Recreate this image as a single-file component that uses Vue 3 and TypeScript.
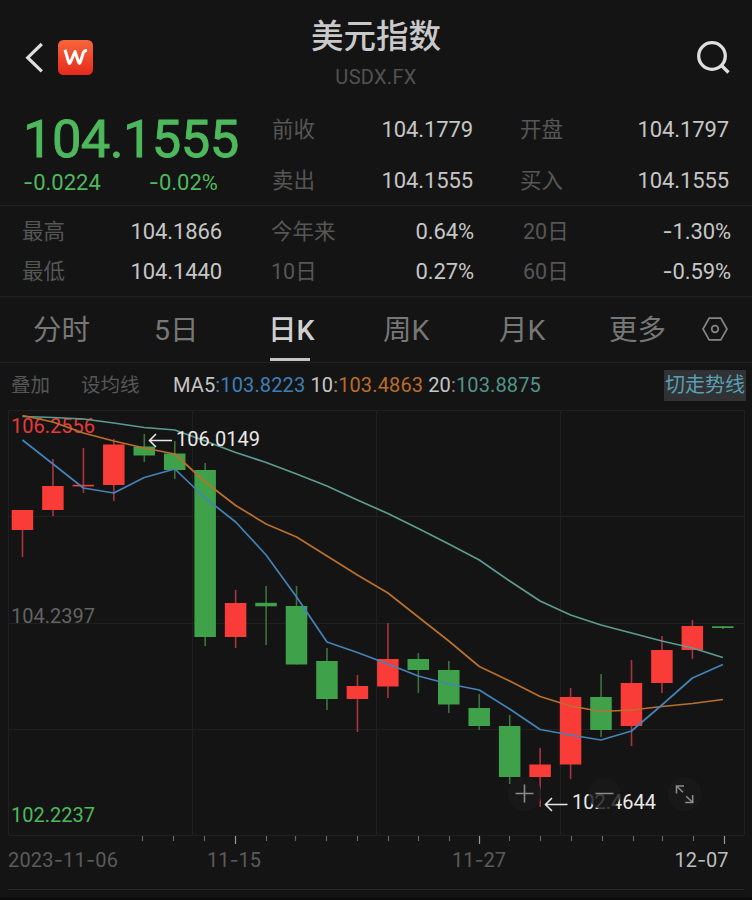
<script setup lang="ts">
interface Candle { open: number; close: number; high: number; low: number; up: boolean }

const split = (s: string): string[] => s.split(/(-)/).filter(Boolean)

const quotes = [
  ['前收', '104.1779', '开盘', '104.1797'],
  ['卖出', '104.1555', '买入', '104.1555'],
]
const stats = [
  ['最高', '104.1866', '今年来', '0.64%', '20日', '-1.30%'],
  ['最低', '104.1440', '10日', '0.27%', '60日', '-0.59%'],
]
const tabs = ['分时', '5日', '日K', '周K', '月K', '更多']
const active = '日K'

// Each row: body top, body bottom, wick top, wick bottom, rising (1) or falling (0)
const rows: number[][] = [
  [510, 530, 510, 557, 1], [486, 510, 459, 516, 1], [484.8, 486.4, 448, 493, 1],
  [444.5, 485, 439, 501, 1], [446.5, 455.5, 434, 462, 0], [453.5, 470, 441, 479, 0],
  [470, 637, 463, 646, 0], [603, 637, 590, 648, 1], [602.8, 606.3, 586, 645, 0],
  [606, 664.5, 586, 664.5, 0], [661, 699, 648, 710, 0], [686, 699, 675, 732, 1],
  [659, 686.5, 623, 698, 1], [659, 670, 653, 693, 0], [670, 704.5, 661, 713, 0],
  [708, 726, 694, 730, 0], [726, 777, 715, 784, 0], [764.5, 777, 748, 807, 1],
  [697, 764.5, 688, 779, 1], [697, 730, 674, 737, 0], [683, 726, 660, 746, 1],
  [650, 683, 636, 693, 1], [626, 650, 620, 659, 1], [626.3, 628, 626, 629, 0],
]
const candles: Candle[] = rows.map(([open, close, high, low, up]) => ({ open, close, high, low, up: up === 1 }))
const px = (i: number): number => 22.5 + i * 30.45
const line = (ys: number[]): string => ys.map((y, i) => `${px(i).toFixed(1)},${y}`).join(' ')

const ma5 = line([440, 464, 488, 493, 477.5, 469, 498, 522, 555, 597, 642, 652.5, 664, 676, 684, 690, 709, 729.5, 735, 740, 731, 705, 678, 664.5])
const ma10 = line([415.5, 422, 433, 441, 448, 454, 482, 505.5, 524, 537, 556, 575, 593, 617, 641, 666.5, 681, 696.5, 706, 711.5, 710, 706.5, 703.5, 699.5])
const ma20 = line([416.5, 417.5, 419, 423, 427.5, 430, 441, 452.5, 462.5, 474, 486, 500, 513.5, 528.5, 544, 560, 581, 601, 615, 625, 633, 641, 648, 657.5])

const ticks = [142.5, 173.5, 204.5, 235.5, 266.5, 295.5, 326.5, 357.5, 388.5, 418.5, 449.5, 479.5, 509.5, 540.5, 571.5, 602.5, 633.5, 662.5, 693.5, 724.5]
const longTicks = [235.5, 479.5, 724.5]
</script>

<template>
  <main class="app">
    <header class="header">
      <div class="nav">
        <svg class="back" width="20" height="32" viewBox="0 0 20 32"><path d="M17.800 2 3.700 15.700 17.800 29.400" /></svg>
        <svg class="logo" width="35" height="35" viewBox="0 0 35 35">
          <defs><linearGradient id="lg" x1="0" y1="0" x2="0" y2="1"><stop offset="0" stop-color="#f9653a" /><stop offset="1" stop-color="#e52a1d" /></linearGradient></defs>
          <rect width="35" height="35" rx="5.500" fill="url(#lg)" />
          <path d="M7 9.800 10.700 22.300q.7 2.200 1.700 0L17 11.500 20.600 22.300q.8 2.200 1.700 0L25.300 12.800q.8-2.200 3.700-2.200" />
        </svg>
      </div>
      <div class="heading">
        <h1>美元指数</h1>
        <p>USDX.FX</p>
      </div>
      <svg class="search" width="36" height="36" viewBox="0 0 36 36"><circle cx="16" cy="16" r="13.300" /><path d="m25.500 25.500 7 7" /></svg>
    </header>

    <section class="quote">
      <div class="price">
        <strong>104.1555</strong>
        <div class="change">
          <span v-for="t in ['-0.0224', '-0.02%']" :key="t"><span v-for="(p, i) in split(t)" :key="i" :class="{ dash: p === '-' }">{{ p }}</span></span>
        </div>
      </div>
      <div class="quotes">
        <div v-for="(q, i) in quotes" :key="i" class="quote-row">
          <span class="label">{{ q[0] }}</span><span class="num">{{ q[1] }}</span>
          <span class="label third">{{ q[2] }}</span><span class="num">{{ q[3] }}</span>
        </div>
      </div>
    </section>

    <section class="stats">
      <div v-for="(s, i) in stats" :key="i" class="stat-row">
        <template v-for="(t, j) in s" :key="j">
          <span v-if="j % 2 === 0" class="label">{{ t }}</span>
          <span v-else class="num"><span v-for="(p, k) in split(t)" :key="k" :class="{ dash: p === '-' }">{{ p }}</span></span>
        </template>
      </div>
    </section>

    <nav class="tabs">
      <span v-for="t in tabs" :key="t" class="tab" :class="{ active: t === active }">{{ t }}</span>
      <svg class="settings" width="26" height="24" viewBox="0 0 26 24"><path d="M7.200 1.200h11.600L25 12l-6.200 10.800H7.200L1 12z" /><circle cx="13" cy="12" r="3.300" /></svg>
    </nav>

    <section class="tools">
      <span class="tool">叠加</span>
      <span class="tool">设均线</span>
      <p class="ma">MA5<i class="c5">:103.8223</i> 10<i class="c10"><b>:</b>103.4863</i> 20<i class="c20"><b>:</b>103.8875</i></p>
      <span class="switch">切走势线</span>
    </section>

    <svg class="chart" width="752" height="492" viewBox="0 408 752 492">
      <g class="grid">
        <path d="M9 410.500H744M9 516.500H744M9 623.500H744M9 729.500H744M9 835.500H744M8.500 410V835M192.500 410V835M376.500 410V835M560.500 410V835M744.500 410V835" />
      </g>
      <path class="divider" d="M8 889.500H744" />
      <rect y="897" width="752" height="3" fill="#0d0d0d" />
      <text class="price-label high" x="11" y="433" textLength="84">106.2556</text>
      <text class="price-label" x="11" y="623" textLength="84">104.2397</text>
      <text class="price-label low" x="11" y="822" textLength="84">102.2237</text>

      <g v-for="(c, i) in candles" :key="i" :class="c.up ? 'up' : 'down'">
        <path class="wick" :d="`M${px(i)} ${c.high}V${c.low}`" />
        <rect :x="px(i) - 10.8" :y="c.open" width="21.500" :height="c.close - c.open" />
      </g>
      <polyline class="ma-line l20" :points="ma20" />
      <polyline class="ma-line l10" :points="ma10" />
      <polyline class="ma-line l5" :points="ma5" />

      <g class="note">
        <path d="M172 440.500H149.500M156 434l-6.500 6.500 6.500 6.500" />
        <text x="176" y="445.500" textLength="84">106.0149</text>
        <path d="M567.500 804.500H545.500M552 798l-6.500 6.500 6.500 6.500" />
        <text x="572" y="809" textLength="84">102.4644</text>
      </g>

      <g class="control">
        <circle cx="524.500" cy="794" r="17" /><circle cx="604.500" cy="794" r="16" /><circle cx="684.500" cy="794" r="17" />
        <path d="M515.500 793.500h18M524.500 784.500v18M595.500 793.500h18" />
        <path class="expand" d="M676.500 793.500v-7.500h7.500M676.500 786l6.500 6.300M692.700 795v7.500h-7.500M692.700 802.500l-6.500-6.300" />
      </g>

      <path v-for="t in ticks" :key="t" class="tick" :class="{ long: longTicks.includes(t) }" :d="`M${t} 836V${longTicks.includes(t) ? 844 : 841}`" />
      <g class="date">
        <text x="8" y="866.500" textLength="110">2023<tspan class="dash">-</tspan>11<tspan class="dash">-</tspan>06</text>
        <text x="207" y="866.500" textLength="54">11<tspan class="dash">-</tspan>15</text>
        <text x="452" y="866.500" textLength="54">11<tspan class="dash">-</tspan>27</text>
        <text class="today" x="674.500" y="866.500" textLength="54">12<tspan class="dash">-</tspan>07</text>
      </g>
    </svg>
  </main>
</template>

<style>
body { background: #141414; }
</style>

<style scoped>
.app { width: 752px; height: 900px; overflow: hidden; background: #141414; color: #c6c6c6; font-family: Roboto, "Noto Sans CJK SC", sans-serif; }
.dash { font-family: Inter, sans-serif; line-height: 1; }
.header { display: grid; grid-template-columns: 200px 1fr 200px; height: 100px; }
.nav { display: flex; gap: 14px; padding: 40px 0 0 24px; align-items: flex-start; }
.back { margin-top: 2px; fill: none; stroke: #dedede; stroke-width: 3.200; }
.logo path { fill: none; stroke: #fff; stroke-width: 3; stroke-linejoin: round; }
.heading { text-align: center; }
h1 { margin: 13px 0 0; font-size: 32.5px; line-height: 48px; font-weight: 500; color: #c9c9c9; }
.heading p { margin: 4px 0 0; font-size: 20px; line-height: 24px; color: #525252; letter-spacing: 0.3px; }
.search { justify-self: end; margin: 40px 20px 0 0; fill: none; stroke: #dedede; stroke-width: 3.300; }
.quote { display: flex; height: 105px; border-bottom: 1px solid #222; }
.price { width: 272px; color: #4eb95c; }
.price strong { display: block; margin: 9px 0 0 23px; font-size: 52.500px; line-height: 60px; font-weight: 400; letter-spacing: -0.6px; -webkit-text-stroke: 0.9px #4eb95c; }
.change { display: flex; gap: 48px; margin: 1px 0 0 23px; font-size: 22px; line-height: 26px; }
.quotes { flex: 1; padding-top: 5px; }
.quote-row { display: grid; grid-template-columns: 92px 109px 109px 147px; height: 51px; line-height: 50px; font-size: 22px; }
.third { padding-left: 47px; }
.label { color: #565656; font-size: 21.500px; white-space: nowrap; }
.num { text-align: right; font-size: 22px; letter-spacing: -0.1px; }
.stats { height: 90px; border-bottom: 1px solid #222; }
.stat-row { display: grid; grid-template-columns: 99px 101px 150px 102px 147px 110px; height: 40px; padding-left: 22px; line-height: 42px; }
.stat-row:first-child { padding-top: 5px; }
.stat-row .label:nth-child(n+2) { padding-left: 49px; }
.tabs { display: flex; height: 65px; border-bottom: 1px solid #222; font-size: 28.500px; color: #777; line-height: 67px; }
.tab { position: relative; flex: 0 0 115px; padding-left: 33px; box-sizing: border-box; white-space: nowrap; }
.tab:nth-child(2) { padding-left: 39px; }
.tab:nth-child(3) { padding-left: 38px; }
.tab:nth-child(4) { padding-left: 38px; }
.tab:nth-child(5) { padding-left: 39px; }
.tab:nth-child(6) { padding-left: 34px; }
.active { color: #d0d0d0; font-weight: 500; }
.active::after { content: ""; position: absolute; left: 40px; bottom: 1px; width: 40px; height: 3px; background: #c4c4c4; }
.settings { margin: 20px 0 0 12px; fill: none; stroke: #858585; stroke-width: 1.700; }
.tools { display: flex; height: 45px; line-height: 44px; font-size: 19.500px; align-items: center; padding-left: 11px; }
.tool { color: #565656; width: 70px; white-space: nowrap; }
.ma { margin: -2px 0 0 22px; width: 491px; font-size: 20px; white-space: pre; letter-spacing: 0.13px; }
.ma i { font-style: normal; }
.ma b { font-weight: 400; color: #888; }
.c5 { color: #3d7fb5; }
.c10 { color: #b96c2b; }
.c20 { color: #529388; }
.switch { width: 82px; height: 31px; background: #303233; color: #5b9eb5; font-size: 20px; line-height: 31px; text-align: center; white-space: nowrap; }
.chart { display: block; }
.grid path, .divider { fill: none; stroke: #202020; stroke-width: 1; }
.divider { stroke: #292929; }
.price-label { font-size: 20px; fill: #636363; }
.high { fill: #e63a3b; }
.low { fill: #4eb95c; }
.up rect { fill: #f93c38; }
.down rect { fill: #3fa24b; }
.wick { stroke-width: 1.600; }
.up .wick { stroke: #a83440; }
.down .wick { stroke: #39733f; }
.ma-line { fill: none; stroke-width: 1.700; stroke-linejoin: round; }
.l5 { stroke: #4383b8; }
.l10 { stroke: #b9702f; }
.l20 { stroke: #5c9c90; }
.note path { fill: none; stroke: #e6e6e6; stroke-width: 1.600; }
.note text { fill: #e9e9e9; font-size: 20px; }
.control circle { fill: #1a1a1a; fill-opacity: 0.82; }
.control path { fill: none; stroke: #8b8b8b; stroke-width: 1.600; }
.tick { stroke: #666; stroke-width: 1.200; }
.long { stroke: #999; }
.date text { font-size: 20px; fill: #5b5b5b; }
.date .today { fill: #bdbdbd; }
</style>
